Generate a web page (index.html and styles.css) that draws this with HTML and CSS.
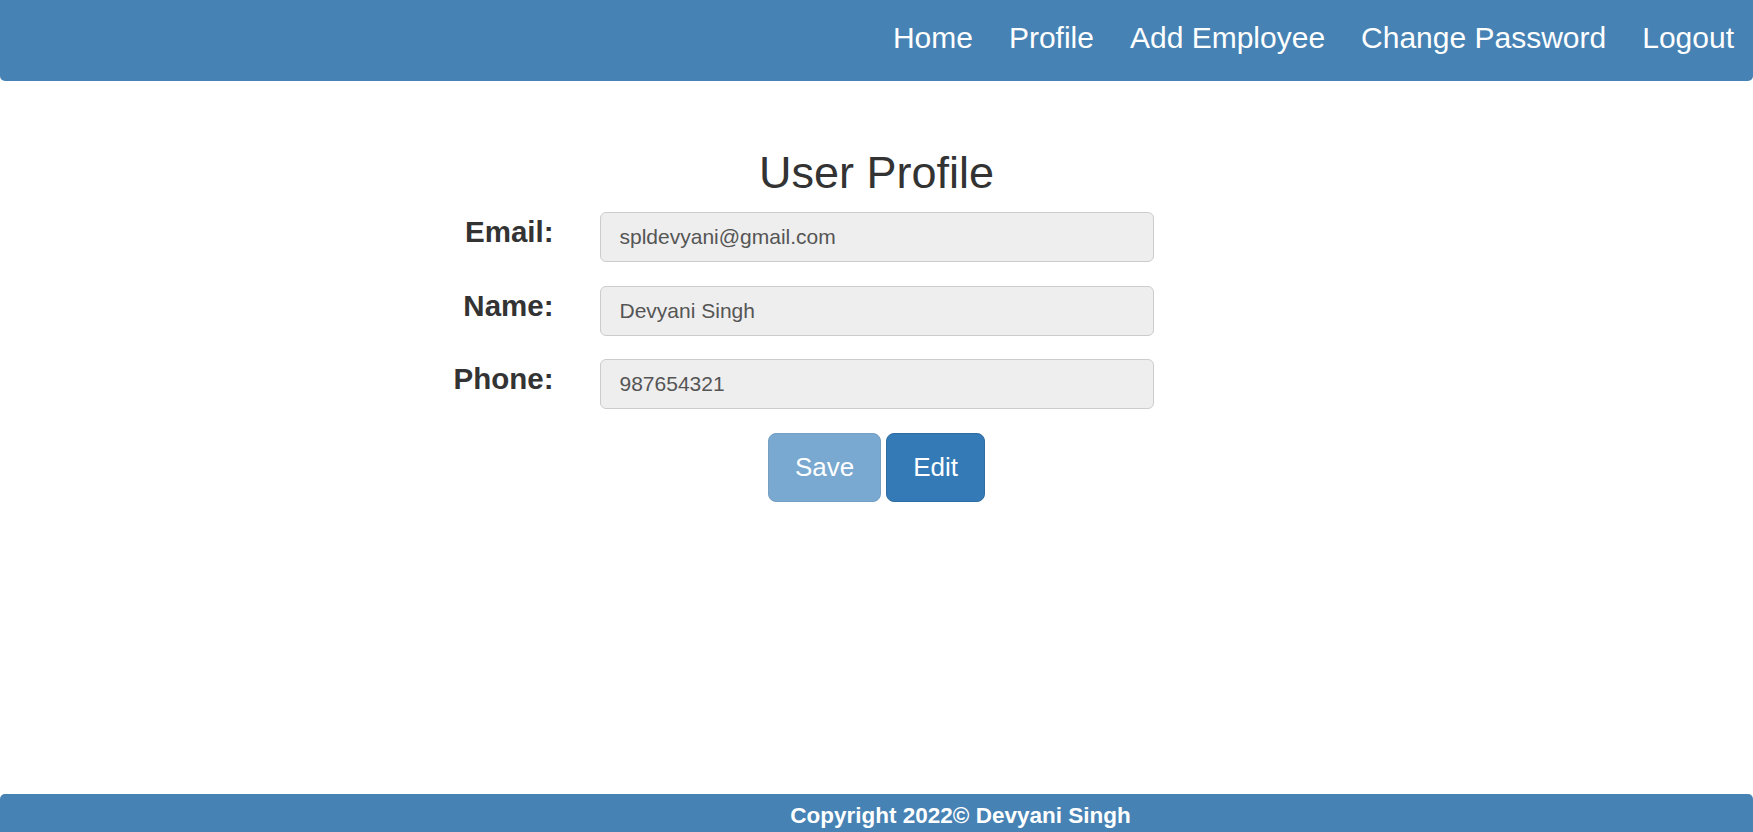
FILE: index.html
```html
<!DOCTYPE html>
<html lang="en">
<head>
<meta charset="utf-8">
<title>User Profile</title>
<link rel="stylesheet" href="styles.css">
</head>
<body>
<div class="page">
  <header class="topbar">
    <nav class="nav">
      <a href="#" class="nav-link">Home</a>
      <a href="#" class="nav-link">Profile</a>
      <a href="#" class="nav-link">Add Employee</a>
      <a href="#" class="nav-link">Change Password</a>
      <a href="#" class="nav-link">Logout</a>
    </nav>
  </header>
  <main class="main">
    <h1 class="title">User Profile</h1>
    <form class="profile-form">
      <label class="field-label" for="email">Email:</label>
      <input class="field-input" id="email" type="text" value="spldevyani@gmail.com" readonly>
      <label class="field-label" for="name">Name:</label>
      <input class="field-input" id="name" type="text" value="Devyani Singh" readonly>
      <label class="field-label" for="phone">Phone:</label>
      <input class="field-input" id="phone" type="text" value="987654321" readonly>
    </form>
    <div class="actions">
      <button class="btn btn-disabled" type="button">Save</button>
      <button class="btn" type="button">Edit</button>
    </div>
  </main>
  <footer class="footer">Copyright 2022&copy; Devyani Singh</footer>
</div>
</body>
</html>
```
FILE: styles.css
```css
html, body {
  margin: 0;
  padding: 0;
  overflow: hidden;
  height: 100%;
}
body {
  font-family: "Liberation Sans", Arial, sans-serif;
  color: #333;
  background: #fff;
}
.page {
  display: flex;
  flex-direction: column;
  height: 852px;
}
.topbar {
  height: 81px;
  box-sizing: border-box;
  background: #4682b4;
  border-radius: 0 0 5px 5px;
  padding: 21px 19px 0 0;
}
.nav {
  display: flex;
  justify-content: flex-end;
  gap: 36px;
}
.nav-link {
  color: #fff;
  text-decoration: none;
  font-size: 30px;
  line-height: 34px;
}
.main {
  flex: 1;
  display: flex;
  flex-direction: column;
  align-items: center;
}
.title {
  margin: 67px 0 0;
  font-size: 45px;
  font-weight: 400;
  line-height: 49.5px;
  color: #333;
}
.profile-form {
  width: 970px;
  margin-top: 14.5px;
  display: grid;
  grid-template-columns: 162px 554px;
  column-gap: 46px;
  row-gap: 23.5px;
  align-items: start;
}
.field-label {
  justify-self: end;
  font-size: 29.5px;
  font-weight: 700;
  line-height: 34px;
  padding-top: 3px;
  color: #333;
}
.field-input {
  box-sizing: border-box;
  width: 554px;
  height: 50px;
  margin: 0;
  padding: 0 19px;
  font-family: "Liberation Sans", Arial, sans-serif;
  font-size: 21px;
  color: #555;
  background: #eee;
  border: 1px solid #ccc;
  border-radius: 6px;
  outline: none;
}
.actions {
  display: flex;
  gap: 5px;
  margin-top: 23.5px;
}
.btn {
  box-sizing: border-box;
  height: 69px;
  padding: 0 26px;
  font-family: "Liberation Sans", Arial, sans-serif;
  font-size: 26px;
  color: #fff;
  background: #337ab7;
  border: 1px solid #2e6da4;
  border-radius: 8px;
}
.btn-disabled {
  opacity: 0.65;
}
.footer {
  height: 58px;
  box-sizing: border-box;
  background: #4682b4;
  border-radius: 5px 5px 0 0;
  color: #fff;
  font-size: 22.5px;
  font-weight: 700;
  line-height: 26px;
  text-align: center;
  padding: 9px 0 0 168px;
}
```
